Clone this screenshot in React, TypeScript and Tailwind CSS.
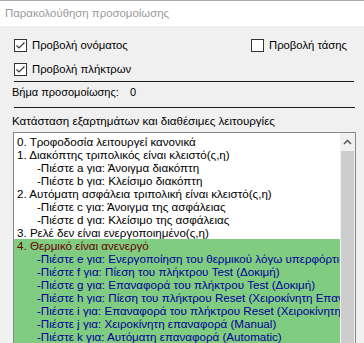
import React from "react";

function Check({ checked }: { checked: boolean }) {
  return (
    <div className="w-[13px] h-[13px] border border-[#333333] bg-white flex items-center justify-center shrink-0">
      {checked && (
        <svg width="11" height="11" viewBox="0 0 11 11">
          <path d="M1.5 5.5 L4 8 L9.5 2.5" fill="none" stroke="#333" strokeWidth="1.1" />
        </svg>
      )}
    </div>
  );
}

const rows: { t: string; sub?: boolean; green?: boolean; head?: boolean }[] = [
  { t: "0. Τροφοδοσία λειτουργεί κανονικά" },
  { t: "1. Διακόπτης τριπολικός είναι κλειστό(ς,η)" },
  { t: "-Πιέστε a για: Άνοιγμα διακόπτη", sub: true },
  { t: "-Πιέστε b για: Κλείσιμο διακόπτη", sub: true },
  { t: "2. Αυτόματη ασφάλεια τριπολική είναι κλειστό(ς,η)" },
  { t: "-Πιέστε c για: Άνοιγμα της ασφάλειας", sub: true },
  { t: "-Πιέστε d για: Κλείσιμο της ασφάλειας", sub: true },
  { t: "3. Ρελέ δεν είναι ενεργοποιημένο(ς,η)" },
  { t: "4. Θερμικό είναι ανενεργό", green: true, head: true },
  { t: "-Πιέστε e για: Ενεργοποίηση του θερμικού λόγω υπερφόρτισης", sub: true, green: true },
  { t: "-Πιέστε f για: Πίεση του πλήκτρου Test (Δοκιμή)", sub: true, green: true },
  { t: "-Πιέστε g για: Επαναφορά του πλήκτρου Test (Δοκιμή)", sub: true, green: true },
  { t: "-Πιέστε h για: Πίεση του πλήκτρου Reset (Χειροκίνητη Επαναφορά)", sub: true, green: true },
  { t: "-Πιέστε i για: Επαναφορά του πλήκτρου Reset (Χειροκίνητη Επαναφορά)", sub: true, green: true },
  { t: "-Πιέστε j για: Χειροκίνητη επαναφορά (Manual)", sub: true, green: true },
  { t: "-Πιέστε k για: Αυτόματη επαναφορά (Automatic)", sub: true, green: true },
];

export default function App() {
  return (
    <div className="w-[364px] h-[343px] overflow-hidden bg-[#f0f0f0] font-['Liberation_Sans',sans-serif] text-[11.6px] text-black flex flex-col">
      <div className="h-[26px] shrink-0 bg-white border-t border-[#ababab] pl-[5px] flex items-center text-[11.4px] text-[#9a9a9a]">
        Παρακολούθηση προσομοίωσης
      </div>
      <div className="flex items-center mt-[13px] h-[13px] text-[11.3px]">
        <div className="flex items-center gap-[5px] pl-[14px] w-[251px]">
          <Check checked />
          <span>Προβολή ονόματος</span>
        </div>
        <div className="flex items-center gap-[5px]">
          <Check checked={false} />
          <span>Προβολή τάσης</span>
        </div>
      </div>
      <div className="flex items-center gap-[5px] pl-[14px] mt-[11px] h-[13px] text-[11.3px]">
        <Check checked />
        <span>Προβολή πλήκτρων</span>
      </div>
      <div className="ml-[14px] w-[340px] h-px bg-[#1a1a1a] mt-[5px]" />
      <div className="flex items-center h-[13px] mt-[4px] pl-[12px] text-[11px]">
        <span className="w-[118px]">Βήμα προσομοίωσης:</span>
        <span>0</span>
      </div>
      <div className="ml-[14px] w-[341px] h-px bg-[#1a1a1a] mt-[8px]" />
      <div className="h-[13px] mt-[7px] pl-[12px] flex items-center">
        Κατάσταση εξαρτημάτων και διαθέσιμες λειτουργίες
      </div>
      <div className="ml-[13px] mt-[5px] w-[343px] flex-1 border border-b-0 border-[#828790] bg-white flex">
        <div className="flex-1 overflow-hidden pt-[2px]">
          {rows.map((r, i) => (
            <div
              key={i}
              className={
                "h-[13px] leading-[13px] whitespace-nowrap " +
                (r.sub ? "pl-[23px] " : "pl-[3px] ") +
                (r.green ? "bg-[#80cc80] " : "") +
                (r.head ? "text-[#660000]" : r.green ? "text-[#00009a]" : "text-black")
              }
            >
              {r.t}
            </div>
          ))}
        </div>
        <div className="w-[15px] bg-[#f0f0f0] flex flex-col">
          <div className="h-[18px] flex items-center justify-center">
            <svg width="9" height="6" viewBox="0 0 9 6">
              <path d="M1 5 L4.5 1.5 L8 5" fill="none" stroke="#606060" strokeWidth="1.6" />
            </svg>
          </div>
          <div className="flex-1 mx-px bg-[#cdcdcd]" />
        </div>
      </div>
    </div>
  );
}
